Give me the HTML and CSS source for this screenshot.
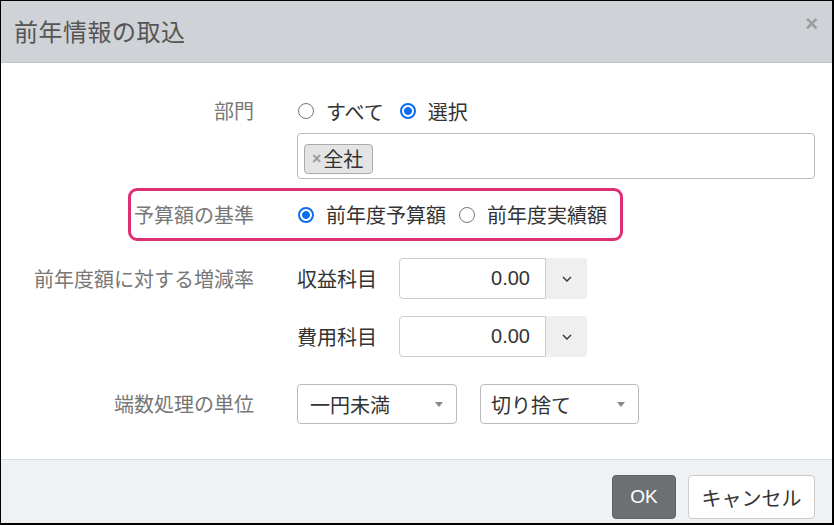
FILE: index.html
```html
<!doctype html>
<html>

<head>
	<meta charset="utf-8">
	<title>前年情報の取込</title>
	<link rel="stylesheet" href="styles.css">
</head>

<body>
	<div class="dialog">
		<div class="dlg-head">
			<span class="dlg-title">前年情報の取込</span>
			<span class="dlg-close">×</span>
		</div>

		<form class="dlg-body" action="#">
			<!-- 部門 -->
			<div class="row">
				<div class="lbl">部門</div>
				<div class="ctl">
					<div class="radios">
						<label><input type="radio" name="bumon" value="all">すべて</label>
						<label><input type="radio" name="bumon" value="sel" checked>選択</label>
					</div>
					<div class="tagbox">
						<span class="tag"><span class="tag-x">×</span>全社</span>
					</div>
				</div>
			</div>

			<!-- 予算額の基準 (highlighted) -->
			<div class="row row-hl">
				<div class="lbl">予算額の基準</div>
				<div class="ctl">
					<div class="radios">
						<label><input type="radio" name="kijun" value="yosan" checked>前年度予算額</label>
						<label><input type="radio" name="kijun" value="jisseki">前年度実績額</label>
					</div>
				</div>
			</div>

			<!-- 増減率 -->
			<div class="row row-rate">
				<div class="lbl">前年度額に対する増減率</div>
				<div class="ctl">
					<div class="rate">
						<span class="sub">収益科目</span>
						<div class="num">
							<input type="text" value="0.00">
							<span class="num-btn"><svg width="10" height="6" viewBox="0 0 10 6"><path d="M1 1l4 4 4-4" fill="none" stroke="#333" stroke-width="1.4"/></svg></span>
						</div>
					</div>
					<div class="rate">
						<span class="sub">費用科目</span>
						<div class="num">
							<input type="text" value="0.00">
							<span class="num-btn"><svg width="10" height="6" viewBox="0 0 10 6"><path d="M1 1l4 4 4-4" fill="none" stroke="#333" stroke-width="1.4"/></svg></span>
						</div>
					</div>
				</div>
			</div>

			<!-- 端数処理 -->
			<div class="row row-round">
				<div class="lbl">端数処理の単位</div>
				<div class="ctl selects">
					<div class="sel sel-1">一円未満<span class="caret"></span></div>
					<div class="sel sel-2">切り捨て<span class="caret"></span></div>
				</div>
			</div>
		</form>

		<div class="dlg-foot">
			<button class="btn btn-ok" type="button">OK</button>
			<button class="btn btn-cancel" type="button">キャンセル</button>
		</div>
	</div>
</body>

</html>
```

FILE: styles.css
```css
html,
body {
	margin: 0;
	padding: 0;
	background: #fff;
}

body {
	font-family: "Noto Sans CJK JP", "Noto Sans", sans-serif;
	font-size: 20px;
	color: #333;
}

.dialog {
	box-sizing: border-box;
	width: 834px;
	height: 525px;
	border-style: solid;
	border-color: #000;
	border-width: 1px 2px 2px 1px;
	display: flex;
	flex-direction: column;
	overflow: hidden;
}

/* header */
.dlg-head {
	box-sizing: border-box;
	height: 62px;
	flex: none;
	background: #cfd3d7;
	border-bottom: 1px solid #bfc4c8;
	display: flex;
	align-items: center;
	justify-content: space-between;
	padding: 0 14px 2px 13px;
}

.dlg-title {
	font-size: 24px;
	color: #555;
	letter-spacing: 0.5px;
}

.dlg-close {
	font-family: "Liberation Sans", sans-serif;
	font-size: 22px;
	font-weight: bold;
	color: #9a9da0;
	margin-bottom: 14px;
}

/* body */
.dlg-body {
	flex: 1;
	margin: 0;
	padding-top: 33px;
}

.row {
	display: flex;
	align-items: flex-start;
}

.lbl {
	width: 253px;
	flex: none;
	text-align: right;
	line-height: 30px;
	color: #777;
	margin-right: 43px;
}

.ctl {
	flex: 1;
	margin-right: 17px;
}

.radios {
	display: flex;
	height: 30px;
	align-items: center;
}

.radios label {
	display: flex;
	align-items: center;
	margin-right: 15px;
	white-space: nowrap;
}

.radios input {
	-webkit-appearance: none;
	appearance: none;
	flex: none;
	box-sizing: border-box;
	width: 16px;
	height: 16px;
	margin: 0 12px 0 1px;
	border: 1px solid #767676;
	border-radius: 50%;
	background: #fff;
}

.radios input:checked {
	border: 2px solid #0b6ff2;
	background: radial-gradient(circle, #0b6ff2 0 3.6px, #fff 4.2px);
}

.tagbox {
	box-sizing: border-box;
	height: 46px;
	margin-top: 7px;
	border: 1px solid #bbb;
	border-radius: 4px;
	padding: 7px 6px;
}

.tag {
	display: inline-flex;
	align-items: center;
	box-sizing: border-box;
	height: 30px;
	padding: 0 9px 0 7px;
	background: #e4e4e4;
	border: 1px solid #aaa;
	border-radius: 4px;
	line-height: 1;
}

.tag-x {
	font-family: "Liberation Sans", sans-serif;
	font-size: 16px;
	font-weight: bold;
	color: #999;
	margin-right: 2px;
}

/* highlighted row */
.row-hl {
	margin: 9px 0 0 127px;
	width: 495px;
	box-sizing: border-box;
	height: 53px;
	border: 3px solid #df2f73;
	border-radius: 9px;
	align-items: center;
}

.row-hl .lbl {
	width: 123px;
}

.row-hl .ctl {
	margin-right: 0;
}

.row-hl .radios label {
	margin-right: 12px;
}

/* rate */
.row-rate {
	margin-top: 17px;
}

.row-rate .lbl {
	line-height: 41px;
}

.rate {
	display: flex;
	align-items: center;
	height: 41px;
	margin-bottom: 17px;
}

.sub {
	width: 102px;
	flex: none;
}

.num {
	display: flex;
	height: 41px;
}

.num input {
	box-sizing: border-box;
	width: 147px;
	height: 41px;
	margin: 0;
	border: 1px solid #ccc;
	border-radius: 4px 0 0 4px;
	padding: 0 15px 0 8px;
	text-align: right;
	font-family: "Liberation Sans", "Noto Sans", sans-serif;
	font-size: 20px;
	color: #333;
	outline: none;
}

.num-btn {
	width: 41px;
	height: 41px;
	background: #efefef;
	border-radius: 0 4px 4px 0;
	display: flex;
	align-items: center;
	justify-content: center;
}

/* rounding */
.row-round {
	margin-top: 10px;
}

.row-round .lbl {
	line-height: 40px;
}

.selects {
	display: flex;
	gap: 23px;
}

.sel {
	box-sizing: border-box;
	height: 40px;
	border: 1px solid #bbb;
	border-radius: 4px;
	padding: 0 10px 0 12px;
	display: flex;
	align-items: center;
	justify-content: space-between;
}

.sel-1 {
	width: 160px;
}

.sel-2 {
	width: 159px;
	padding-left: 10px;
}

.caret {
	width: 0;
	height: 0;
	border-left: 4px solid transparent;
	border-right: 4px solid transparent;
	border-top: 5px solid #888;
	margin-right: 3px;
}

/* footer */
.dlg-foot {
	flex: none;
	box-sizing: border-box;
	height: 64px;
	background: #eef2f5;
	border-top: 1px solid #d9dde1;
	display: flex;
	justify-content: flex-end;
	align-items: flex-start;
	padding: 15px 17px 0 0;
}

.btn {
	box-sizing: border-box;
	height: 44px;
	border-radius: 4px;
	font-family: "Noto Sans CJK JP", sans-serif;
	font-size: 20px;
	padding: 0;
	cursor: pointer;
}

.btn-ok {
	width: 64px;
	background: #6c7073;
	border: 1px solid #5f6366;
	color: #fff;
	font-family: "Liberation Sans", sans-serif;
	font-size: 19px;
	margin-right: 12px;
}

.btn-cancel {
	width: 127px;
	background: #fff;
	border: 1px solid #ccc;
	color: #333;
}
```
